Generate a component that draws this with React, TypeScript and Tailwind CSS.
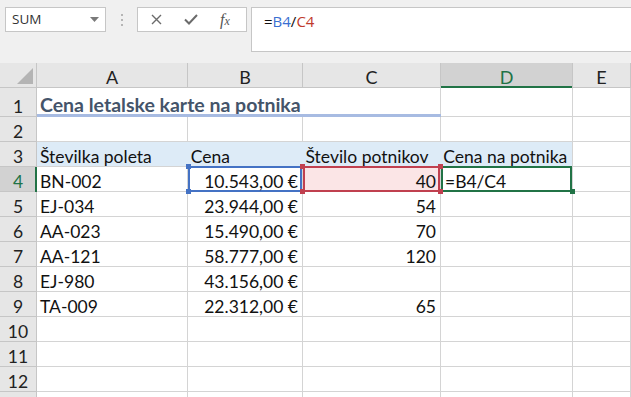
import React from "react";

type Cell = {
  text?: string;
  align?: "left" | "right";
};

const COLS = ["A", "B", "C", "D", "E"];
const COL_W = ["w-[151px]", "w-[115px]", "w-[138px]", "w-[132px]", "w-[58px]"];

const data: Record<number, Cell[]> = {
  5: [{ text: "EJ-034" }, { text: "23.944,00 €", align: "right" }, { text: "54", align: "right" }],
  6: [{ text: "AA-023" }, { text: "15.490,00 €", align: "right" }, { text: "70", align: "right" }],
  7: [{ text: "AA-121" }, { text: "58.777,00 €", align: "right" }, { text: "120", align: "right" }],
  8: [{ text: "EJ-980" }, { text: "43.156,00 €", align: "right" }, {}],
  9: [{ text: "TA-009" }, { text: "22.312,00 €", align: "right" }, { text: "65", align: "right" }],
};

function RowHeader({ n, active = false, tall = false }: { n?: number; active?: boolean; tall?: boolean }) {
  return (
    <div
      className={
        "relative flex w-[37px] shrink-0 items-end justify-center border-r border-b border-[#c6c6c6] pb-[1px] " +
        (tall ? "h-[29px] " : "h-[25px] ") +
        (active ? "bg-[#d2d2d2] text-[#217346]" : "bg-[#e6e6e6] text-[#222]")
      }
    >
      {n}
      {active && <span className="absolute top-0 right-[-1px] bottom-[-1px] w-[2px] bg-[#217346]" />}
    </div>
  );
}

function Corner({ className }: { className: string }) {
  return <span className={"absolute z-10 h-[5px] w-[5px] " + className} />;
}

function Plain({ n, label = true }: { n: number; label?: boolean }) {
  const row = data[n] ?? [];
  return (
    <div className="flex h-[25px]">
      <RowHeader n={label ? n : undefined} />
      {COL_W.map((w, i) => {
        const c = row[i] ?? {};
        return (
          <div
            key={i}
            className={
              w +
              " flex shrink-0 items-end border-r border-b border-[#d4d4d4] pb-[1px] " +
              (c.align === "right" ? "justify-end pr-[4px]" : "pl-[3px]")
            }
          >
            {c.text}
          </div>
        );
      })}
    </div>
  );
}

export default function App() {
  return (
    <div
      className="h-[397px] w-[631px] overflow-hidden bg-[#f0f0f0] text-[17.5px] leading-none text-[#111]"
      style={{ fontFamily: "Lato, 'Open Sans', sans-serif" }}
    >
      {/* formula bar */}
      <div className="flex h-[63px] items-start pt-[7px]" style={{ fontFamily: "'Open Sans', 'Noto Sans', sans-serif" }}>
        <div className="ml-[5px] flex h-[25px] w-[101px] items-center justify-between border border-[#c6c6c6] bg-white pr-[6px] pl-[6px] text-[13.5px] text-[#333]">
          <span>SUM</span>
          <svg width="9" height="5" viewBox="0 0 9 5">
            <path d="M0 0h9L4.5 5z" fill="#7a7a7a" />
          </svg>
        </div>
        <div className="ml-[15px] flex h-[25px] flex-col items-center justify-center gap-[3px]">
          <span className="h-[2px] w-[2px] bg-[#b5b5b5]" />
          <span className="h-[2px] w-[2px] bg-[#b5b5b5]" />
          <span className="h-[2px] w-[2px] bg-[#b5b5b5]" />
        </div>
        <div className="ml-[14px] flex h-[25px] w-[110px] items-center border border-[#c6c6c6] bg-white">
          <svg className="ml-[13px]" width="11" height="11" viewBox="0 0 11 11">
            <path d="M1 1l9 9M10 1l-9 9" stroke="#6b6b6b" strokeWidth="1.4" />
          </svg>
          <svg className="ml-[22px]" width="14" height="11" viewBox="0 0 14 11">
            <path d="M1 5.5l4 4L13 1" stroke="#6b6b6b" strokeWidth="2" fill="none" />
          </svg>
          <span
            className="ml-[22px] text-[16px] text-[#555] italic"
            style={{ fontFamily: "'Liberation Serif', serif" }}
          >
            f<span className="text-[12px]">x</span>
          </span>
        </div>
        <div className="ml-[4px] flex h-[45px] flex-1 border-y border-l border-[#c6c6c6] bg-white pt-[6px] pl-[12px] text-[15px]">
          <span className="text-[#111]">=</span>
          <span className="text-[#3a6fd1]">B4</span>
          <span className="text-[#111]">/</span>
          <span className="text-[#c0392b]">C4</span>
        </div>
      </div>

      {/* column headers */}
      <div className="flex h-[25px] bg-[#e6e6e6] text-[18px]">
        <div className="relative w-[37px] shrink-0 border-r border-b border-[#c6c6c6]">
          <svg className="absolute right-[3px] bottom-[3px]" width="16" height="16" viewBox="0 0 16 16">
            <path d="M16 0v16H0z" fill="#b4b4b4" />
          </svg>
        </div>
        {COLS.map((c, i) => (
          <div
            key={c}
            className={
              COL_W[i] +
              " relative flex shrink-0 items-end justify-center border-r border-b border-[#c6c6c6] pb-[1px] " +
              (c === "D" ? "bg-[#d2d2d2] text-[#217346]" : "text-[#222]")
            }
          >
            {c}
            {c === "D" && <span className="absolute right-0 bottom-[-1px] left-0 h-[2px] bg-[#217346]" />}
          </div>
        ))}
      </div>

      <div className="bg-white">
        {/* row 1 */}
        <div className="flex h-[29px]">
          <RowHeader n={1} tall />
          <div className="relative flex w-[404px] shrink-0 items-end border-r border-b border-[#d4d4d4] pb-[2px] pl-[3px]">
            <span className="text-[19.5px] font-bold text-[#44546a]">Cena letalske karte na potnika</span>
            <span className="absolute right-[-1px] bottom-[-1px] left-0 h-[3px] bg-[#a7bbe2]" />
          </div>
          <div className="w-[132px] shrink-0 border-r border-b border-[#d4d4d4]" />
          <div className="w-[58px] shrink-0 border-r border-b border-[#d4d4d4]" />
        </div>

        <Plain n={2} />

        {/* row 3 */}
        <div className="flex h-[25px]">
          <RowHeader n={3} />
          <div className="flex w-[536px] shrink-0 items-end border-r border-b border-[#d4d4d4] bg-[#ddebf7] pb-[1px]">
            <span className="w-[151px] pl-[3px]">Številka poleta</span>
            <span className="w-[115px] pl-[3px]">Cena</span>
            <span className="w-[138px] pl-[3px]">Število potnikov</span>
            <span className="w-[132px] pl-[3px]">Cena na potnika</span>
          </div>
          <div className="w-[58px] shrink-0 border-r border-b border-[#d4d4d4]" />
        </div>

        {/* row 4 */}
        <div className="flex h-[25px]">
          <RowHeader n={4} active />
          <div className="flex w-[151px] shrink-0 items-end border-r border-b border-[#d4d4d4] pb-[1px] pl-[3px]">BN-002</div>
          <div className="relative flex w-[115px] shrink-0 items-end justify-end border-r border-b border-[#d4d4d4] pr-[4px] pb-[1px]">
            <span className="absolute inset-x-[0px] top-[-1px] bottom-[-1px] border-2 border-[#4472c4]" />
            <Corner className="top-[-3px] left-[-2px] bg-[#4472c4]" />
            <Corner className="bottom-[-3px] left-[-2px] bg-[#4472c4]" />
            <span className="relative">10.543,00 €</span>
          </div>
          <div className="relative flex w-[138px] shrink-0 items-end justify-end border-r border-b border-[#d4d4d4] bg-[#fbe5e6] pr-[4px] pb-[1px]">
            <span className="absolute inset-x-[0px] top-[-1px] bottom-[-1px] border-2 border-[#c0404f]" />
            <Corner className="top-[-3px] left-[-3px] bg-[#c0404f]" />
            <Corner className="bottom-[-3px] left-[-3px] bg-[#c0404f]" />
            <Corner className="top-[-3px] right-[-3px] bg-[#c0404f]" />
            <Corner className="right-[-3px] bottom-[-3px] bg-[#c0404f]" />
            <span className="relative">40</span>
          </div>
          <div className="relative flex w-[132px] shrink-0 items-end border-r border-b border-[#d4d4d4] pb-[1px] pl-[4px]">
            <span className="absolute inset-x-[0px] top-[-1px] bottom-[-1px] border-2 border-[#217346]" />
            <Corner className="right-[-3px] bottom-[-3px] bg-[#217346]" />
            <span className="relative">=B4/C4</span>
          </div>
          <div className="w-[58px] shrink-0 border-r border-b border-[#d4d4d4]" />
        </div>

        {[5, 6, 7, 8, 9, 10, 11, 12].map((n) => (
          <Plain key={n} n={n} />
        ))}
        <Plain n={13} label={false} />
      </div>
    </div>
  );
}
